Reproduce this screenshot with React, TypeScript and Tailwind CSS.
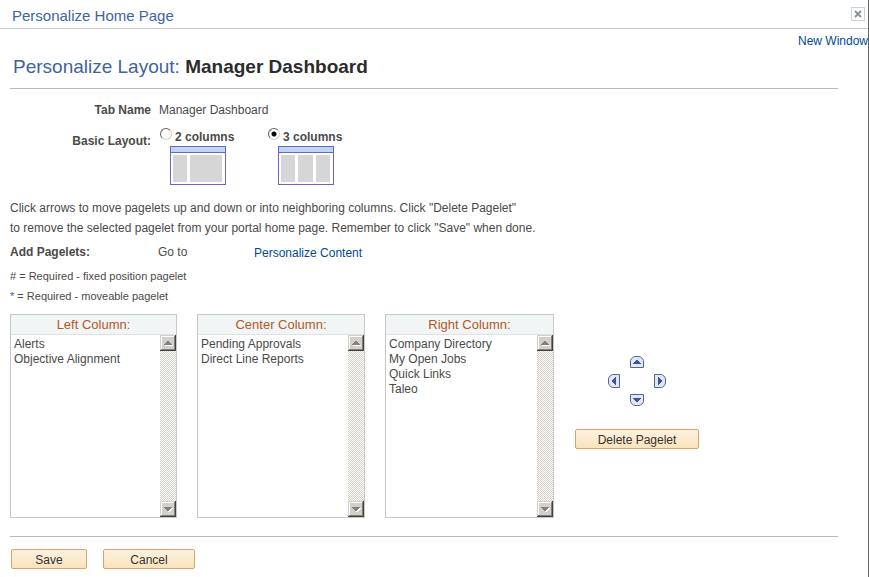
import React from "react";

const columns = [
  { id: "left", title: "Left Column:", width: "w-[167px]", items: ["Alerts", "Objective Alignment"] },
  { id: "center", title: "Center Column:", width: "w-[168px]", items: ["Pending Approvals", "Direct Line Reports"] },
  { id: "right", title: "Right Column:", width: "w-[169px]", items: ["Company Directory", "My Open Jobs", "Quick Links", "Taleo"] },
];

function ScrollButton({ down = false }: { down?: boolean }) {
  return (
    <button type="button" aria-label={down ? "Scroll down" : "Scroll up"} className="block h-4 w-4">
      <svg width="16" height="16" viewBox="0 0 16 16" shapeRendering="crispEdges">
        <rect width="16" height="16" fill="#404040" />
        <rect width="15" height="15" fill="#d4d0c8" />
        <rect x="1" y="1" width="14" height="14" fill="#808080" />
        <rect x="1" y="1" width="13" height="13" fill="#fff" />
        <rect x="2" y="2" width="12" height="12" fill="#d4d0c8" />
        {down ? (
          <>
            <path d="M5 7h8v1h-1v1h-1v1h-1v1H8v-1H7V9H6V8H5z" fill="#fff" />
            <path d="M4 6h8v1h-1v1h-1v1H9v1H7V9H6V8H5V7H4z" fill="#808080" />
          </>
        ) : (
          <>
            <path d="M5 10h8v1H5z" fill="#fff" />
            <path d="M7 6h2v1h1v1h1v1h1v1H4V9h1V8h1V7h1z" fill="#808080" />
          </>
        )}
      </svg>
    </button>
  );
}

function PageletColumn({ column }: { column: (typeof columns)[number] }) {
  return (
    <div className={`${column.width} flex h-[204px] flex-col border border-[#c8c8c8]`}>
      <label
        htmlFor={column.id}
        className="h-5 shrink-0 border-b border-[#e0e2e2] bg-[#f1f5f6] text-center text-[13px] leading-[19px] text-[#b4581c]"
      >
        {column.title}
      </label>
      <div className="flex min-h-0 flex-1">
        <select
          id={column.id}
          size={12}
          className="min-w-0 flex-1 appearance-none overflow-hidden border-0 bg-white p-0 pt-[2px] text-[12px] text-[#4a4a4a] outline-none"
        >
          {column.items.map((item) => (
            <option key={item} className="h-[15px] min-h-0 p-0 pl-[3px] leading-[15px]">
              {item}
            </option>
          ))}
        </select>
        <div className="flex w-4 flex-col justify-between bg-[#d4d0c8] bg-[conic-gradient(#fff_25%,transparent_0_50%,#fff_0_75%,transparent_0)] bg-[size:2px_2px]">
          <ScrollButton />
          <ScrollButton down />
        </div>
      </div>
    </div>
  );
}

function LayoutChoice({ label, panes, checked }: { label: string; panes: string[]; checked?: boolean }) {
  return (
    <div className="w-[108px]">
      <label className="flex h-[18px] items-start gap-[3px] font-bold leading-4">
        <input
          type="radio"
          name="layout"
          defaultChecked={checked}
          className="m-0 h-3 w-3 shrink-0 appearance-none rounded-full border border-t-[#606060] border-r-[#d4d0c8] border-b-[#d4d0c8] border-l-[#606060] bg-white checked:bg-[radial-gradient(circle,#000_2px,transparent_3px)]"
        />
        <span className="pt-px">{label}</span>
      </label>
      <div className="ml-[10px] flex h-[39px] w-14 flex-col border border-[#6666c4] bg-white">
        <div className="h-[6px] shrink-0 border-b border-[#6666c4] bg-[#bcd6f2]" />
        <div className="flex flex-1 gap-[3px] p-[2px]">
          {panes.map((pane, i) => (
            <div key={i} className={`${pane} bg-[#d6d6d6]`} />
          ))}
        </div>
      </div>
    </div>
  );
}

function ArrowButton({ label, turn, upright }: { label: string; turn: string; upright?: boolean }) {
  return (
    <button type="button" aria-label={label} className="block">
      <svg width={upright ? 14 : 12} height={upright ? 12 : 14} viewBox={upright ? "0 0 14 12" : "0 0 12 14"}>
        <g transform={turn}>
          <path d="M.5 11.5v-7l1-2 2-1.5 1.5-.5h4l1.5.5 2 1.5 1 2v7z" fill="#dce8fa" stroke="#5c6480" />
          <path d="M3 8h8v-1h-1V6H9V5H8V4H6v1H5v1H4v1H3z" fill="#445096" shapeRendering="crispEdges" />
        </g>
      </svg>
    </button>
  );
}

function ActionButton({ children, className }: { children: React.ReactNode; className: string }) {
  return (
    <button
      type="button"
      className={`${className} h-5 rounded-[2px] border border-[#dba36c] bg-linear-to-b from-[#fdf1df] to-[#f9e3bb] pt-px text-center leading-4 text-[#333]`}
    >
      {children}
    </button>
  );
}

export default function App() {
  return (
    <div className="min-h-screen border-r border-[#666] bg-white font-['Liberation_Sans',Arial,sans-serif] text-[12px] leading-5 text-[#4a4a4a]">
      <header className="flex h-[29px] items-center justify-between border-b border-[#c8c8d0] pr-[3px] pl-3">
        <h2 className="pt-1 text-[15px] text-[#40649c]">Personalize Home Page</h2>
        <button type="button" aria-label="Close" className="flex h-[14px] w-[14px] items-center justify-center border border-[#ccd2d6]">
          <svg width="8" height="8" viewBox="0 0 8 8">
            <path d="M1 1l6 6M7 1L1 7" stroke="#8495a2" strokeWidth="2" />
          </svg>
        </button>
      </header>

      <div className="flex h-6 items-center justify-end">
        <a href="#new-window" className="text-[#004b91]">New Window</a>
      </div>

      <main className="pr-[30px] pl-[10px]">
        <h1 className="h-9 border-b border-[#b8b8b8] pl-[3px] text-[19px] leading-7 text-[#40649c]">
          Personalize Layout: <strong className="text-[#2c2c2c]">Manager Dashboard</strong>
        </h1>

        <div className="mt-[11px] flex gap-2">
          <div className="w-[141px] text-right font-bold">Tab Name</div>
          <div>Manager Dashboard</div>
        </div>

        <fieldset className="mt-2 flex">
          <div className="mr-[9px] w-[141px] pt-[3px] text-right font-bold">Basic Layout:</div>
          <LayoutChoice label="2 columns" panes={["w-[14px]", "w-8"]} />
          <LayoutChoice label="3 columns" panes={["w-[14px]", "w-[15px]", "w-[14px]"]} checked />
        </fieldset>

        <p className="mt-[13px]">
          Click arrows to move pagelets up and down or into neighboring columns. Click "Delete Pagelet"
          <br />
          to remove the selected pagelet from your portal home page. Remember to click "Save" when done.
        </p>

        <div className="mt-1 flex">
          <div className="w-[148px] font-bold">Add Pagelets:</div>
          <div className="w-24">Go to</div>
          <a href="#content" className="pt-px text-[#004b91]">Personalize Content</a>
        </div>

        <p className="mt-[3px] text-[11px]">
          # = Required - fixed position pagelet
          <br />
          <span className="text-[#40649c]">*</span> = Required - moveable pagelet
        </p>

        <div className="mt-2 flex gap-5">
          {columns.map((column) => (
            <PageletColumn key={column.id} column={column} />
          ))}
          <div className="ml-px flex w-[124px] flex-col items-center pt-[42px]">
            <div className="flex w-[58px] flex-col items-center gap-[6px]">
              <ArrowButton label="Move up" turn="rotate(0)" upright />
              <div className="flex w-full justify-between">
                <ArrowButton label="Move left" turn="translate(0 14) rotate(-90)" />
                <ArrowButton label="Move right" turn="translate(12 0) rotate(90)" />
              </div>
              <ArrowButton label="Move down" turn="translate(14 12) rotate(180)" upright />
            </div>
            <ActionButton className="mt-[23px] w-[124px]">Delete Pagelet</ActionButton>
          </div>
        </div>

        <div className="mt-[18px] flex gap-4 border-t border-[#b8b8b8] pt-3 pl-px">
          <ActionButton className="w-[76px]">Save</ActionButton>
          <ActionButton className="w-[92px]">Cancel</ActionButton>
        </div>
      </main>
    </div>
  );
}
